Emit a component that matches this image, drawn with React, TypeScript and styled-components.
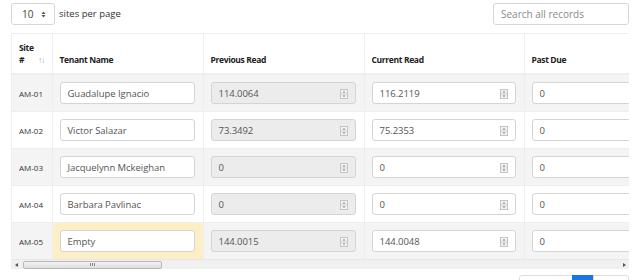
import React from 'react';
import styled, { createGlobalStyle } from 'styled-components';

const GlobalStyle = createGlobalStyle`
  body {
    margin: 0;
    background: #ffffff;
    font-family: 'Open Sans', 'Noto Sans', sans-serif;
    font-size: 10px;
    color: #333333;
    overflow: hidden;
  }
`;

const Page = styled.div`
  padding: 2px 11px 0 11px;
  width: 618px;
  height: 280px;
  overflow: hidden;
`;

const TopBar = styled.div`
  display: flex;
  align-items: center;
  justify-content: space-between;
  height: 23px;
`;

const LengthBox = styled.label`
  display: flex;
  align-items: center;
  gap: 4px;
  font-size: 9.5px;
  color: #333;
`;

const Select = styled.div`
  display: flex;
  align-items: center;
  justify-content: space-between;
  box-sizing: border-box;
  width: 44px;
  height: 22px;
  margin-top: 1px;
  padding: 0 8px 0 10px;
  border: 1px solid #d6d6d6;
  border-radius: 3px;
  font-size: 10px;
  color: #444;
`;

const Search = styled.input`
  box-sizing: border-box;
  width: 136px;
  height: 22px;
  padding: 0 7px;
  border: 1px solid #d6d6d6;
  border-radius: 3px;
  font-family: 'Open Sans', sans-serif;
  font-size: 10px;
  color: #555;
  outline: none;
  &::placeholder {
    color: #8a8a8a;
  }
`;

const Scroller = styled.div`
  margin-top: 8px;
  overflow: hidden;
  border-left: 1px solid #eee;
`;

const Table = styled.table`
  border-collapse: collapse;
  table-layout: fixed;
  width: 672px;
`;

const Th = styled.th<{ $w: number }>`
  width: ${p => p.$w}px;
  box-sizing: border-box;
  padding: 8px 7px 7px 7px;
  border-top: 1px solid #eee;
  border-left: 1px solid #eee;
  border-bottom: 2px solid #eee;
  text-align: left;
  vertical-align: bottom;
  font-size: 8.5px;
  font-weight: 700;
  line-height: 12px;
  letter-spacing: -0.35px;
  color: #222;
  white-space: nowrap;
  &:first-child {
    border-left: none;
  }
`;

const SortRow = styled.span`
  display: flex;
  justify-content: space-between;
  align-items: center;
`;

const SortIcon = styled.span`
  font-weight: 400;
  color: #aaa;
  font-size: 8.5px;
  letter-spacing: -1px;
`;

const Tr = styled.tr<{ $striped: boolean }>`
  background: ${p => (p.$striped ? '#f4f4f4' : '#ffffff')};
  border-top: 1px solid #eee;
  &:first-child {
    border-top: none;
  }
`;

const Td = styled.td<{ $warn?: boolean }>`
  padding: 7px 8px 7px 7px;
  border-left: 1px solid #eee;
  vertical-align: middle;
  white-space: nowrap;
  background: ${p => (p.$warn ? '#fcefc5' : 'transparent')};
  &:first-child {
    border-left: none;
    padding: 0 2px 0 7px;
  }
`;

const SiteLabel = styled.span`
  font-size: 8px;
  color: #333;
`;

const Field = styled.div<{ $disabled?: boolean }>`
  position: relative;
  box-sizing: border-box;
  height: 22px;
  display: flex;
  align-items: center;
  padding: 0 7px;
  border: 1px solid #d4d4d4;
  border-radius: 3px;
  background: ${p => (p.$disabled ? '#ececec' : '#ffffff')};
  font-size: 9.5px;
  letter-spacing: -0.05px;
  color: #555;
  white-space: nowrap;
`;

const Spin = styled.svg`
  position: absolute;
  right: 7px;
  top: 6px;
`;

const ScrollTrack = styled.div`
  display: flex;
  align-items: center;
  height: 9px;
  background: #f0f0f0;
  border-top: 1px solid #e6e6e6;
`;

const Arrow = styled.div<{ $dir: 'left' | 'right' }>`
  width: 9px;
  display: flex;
  justify-content: center;
  &::before {
    content: '';
    border-top: 2px solid transparent;
    border-bottom: 2px solid transparent;
    ${p => (p.$dir === 'left' ? 'border-right: 3px solid #555;' : 'border-left: 3px solid #555;')}
  }
`;

const Thumb = styled.div`
  box-sizing: border-box;
  width: 139px;
  height: 8px;
  margin-left: 2px;
  border: 1px solid #b8b8b8;
  border-radius: 2px;
  background: linear-gradient(#f4f4f4, #dcdcdc);
  display: flex;
  justify-content: center;
  align-items: center;
  gap: 1px;
`;

const Grip = styled.span`
  width: 1px;
  height: 3px;
  background: #888;
`;

const TrackFill = styled.div`
  flex: 1;
`;

const Pager = styled.div`
  display: flex;
  justify-content: flex-end;
  margin-top: 6px;
`;

const PageBtn = styled.div<{ $active?: boolean; $w: number }>`
  width: ${p => p.$w}px;
  height: 22px;
  box-sizing: border-box;
  border: 1px solid ${p => (p.$active ? '#1a73e8' : '#ddd')};
  margin-left: -1px;
  background: ${p => (p.$active ? '#1a73e8' : '#fff')};
  &:first-child {
    border-radius: 3px 0 0 0;
  }
  &:last-child {
    border-radius: 0 3px 0 0;
  }
`;

const SpinIcon = () => (
  <Spin width="8" height="10" viewBox="0 0 8 10">
    <rect x="0.5" y="0.5" width="7" height="9" fill="#f3f3f3" stroke="#c4c4c4" />
    <line x1="1" y1="5" x2="7" y2="5" stroke="#d0d0d0" />
    <path d="M2.5 3.5 L4 2 L5.5 3.5 Z" fill="#6b7fa8" />
    <path d="M2.5 6.5 L4 8 L5.5 6.5 Z" fill="#6b7fa8" />
  </Spin>
);

const SelectArrows = () => (
  <svg width="5" height="7" viewBox="0 0 5 7">
    <path d="M0.5 3 L2.5 0.5 L4.5 3 Z" fill="#555" />
    <path d="M0.5 4 L2.5 6.5 L4.5 4 Z" fill="#555" />
  </svg>
);

const rows = [
  { site: 'AM-01', tenant: 'Guadalupe Ignacio', prev: '114.0064', cur: '116.2119', due: '0' },
  { site: 'AM-02', tenant: 'Victor Salazar', prev: '73.3492', cur: '75.2353', due: '0' },
  { site: 'AM-03', tenant: 'Jacquelynn Mckeighan', prev: '0', cur: '0', due: '0' },
  { site: 'AM-04', tenant: 'Barbara Pavlinac', prev: '0', cur: '0', due: '0' },
  { site: 'AM-05', tenant: 'Empty', prev: '144.0015', cur: '144.0048', due: '0', empty: true },
];

export default function App() {
  return (
    <Page>
      <GlobalStyle />
      <TopBar>
        <LengthBox>
          <Select>
            10 <SelectArrows />
          </Select>
          sites per page
        </LengthBox>
        <Search placeholder="Search all records" />
      </TopBar>
      <Scroller>
        <Table>
          <thead>
            <tr>
              <Th $w={40}>
                Site
                <SortRow>
                  # <SortIcon>↑↓</SortIcon>
                </SortRow>
              </Th>
              <Th $w={151}>Tenant Name</Th>
              <Th $w={161}>Previous Read</Th>
              <Th $w={160}>Current Read</Th>
              <Th $w={160}>Past Due</Th>
            </tr>
          </thead>
          <tbody>
            {rows.map((r, i) => (
              <Tr key={r.site} $striped={i % 2 === 0}>
                <Td>
                  <SiteLabel>{r.site}</SiteLabel>
                </Td>
                <Td $warn={r.empty}>
                  <Field>{r.tenant}</Field>
                </Td>
                <Td>
                  <Field $disabled>
                    {r.prev}
                    <SpinIcon />
                  </Field>
                </Td>
                <Td>
                  <Field>
                    {r.cur}
                    <SpinIcon />
                  </Field>
                </Td>
                <Td>
                  <Field>{r.due}</Field>
                </Td>
              </Tr>
            ))}
          </tbody>
        </Table>
        <ScrollTrack>
          <Arrow $dir="left" />
          <Thumb>
            <Grip />
            <Grip />
            <Grip />
          </Thumb>
          <TrackFill />
          <Arrow $dir="right" />
        </ScrollTrack>
      </Scroller>
      <Pager>
        <PageBtn $w={54} />
        <PageBtn $w={22} $active />
        <PageBtn $w={36} />
      </Pager>
    </Page>
  );
}
